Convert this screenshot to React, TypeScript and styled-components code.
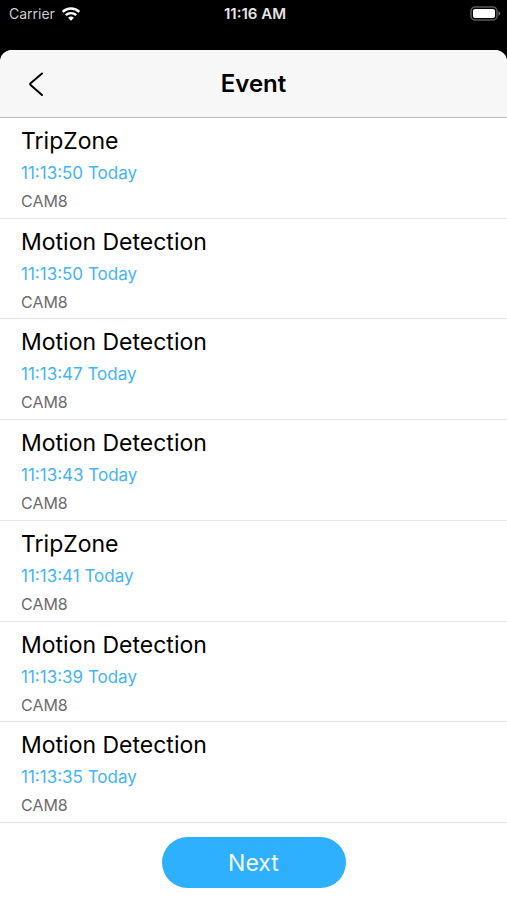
import React from "react";
import styled, { createGlobalStyle } from "styled-components";

const GlobalStyle = createGlobalStyle`
  *, *::before, *::after { box-sizing: border-box; }
  html, body { margin: 0; background: #000; }
  body { font-family: Inter, "Liberation Sans", sans-serif; color: #000; }
`;

const Screen = styled.div`
  min-height: 100vh;
  display: flex;
  flex-direction: column;
`;

const StatusBar = styled.div`
  height: 50px;
  padding: 3px 6px 0 9px;
  display: grid;
  grid-template-columns: 1fr auto 1fr;
  align-items: start;
  color: #e6e6e6;
  font-size: 15px;
  line-height: 22px;
`;

const Carrier = styled.div`
  display: flex;
  align-items: center;
  gap: 6px;
  color: #ccc;
  font-size: 14px;
`;

const Clock = styled.time`
  font-weight: 600;
`;

const Battery = styled.div`
  height: 22px;
  display: flex;
  align-items: center;
  justify-content: flex-end;
`;

const Sheet = styled.main`
  flex: 1;
  display: flex;
  flex-direction: column;
  background: #fff;
  border-radius: 12px 12px 0 0;
  overflow: hidden;
`;

const Header = styled.header`
  height: 68px;
  padding: 0 20px;
  display: grid;
  grid-template-columns: 32px 1fr 32px;
  align-items: center;
  background: #f7f7f7;
  border-bottom: 1px solid #bcbcbc;
`;

const BackButton = styled.button`
  height: 40px;
  padding: 0;
  display: flex;
  align-items: center;
  justify-content: center;
  border: 0;
  background: none;
  color: #000;
`;

const Title = styled.h1`
  margin: 0;
  padding-top: 1px;
  text-align: center;
  font-size: 24px;
  font-weight: 600;
  line-height: 32px;
`;

const EventList = styled.ul`
  flex: 1;
  margin: 0;
  padding: 0;
  display: grid;
  grid-auto-rows: 1fr;
  list-style: none;
`;

const EventRow = styled.li`
  padding: 7px 21px 4px;
  border-bottom: 1px solid #e6e6e6;
`;

const EventName = styled.h2`
  margin: 0;
  font-size: 23px;
  font-weight: 400;
  line-height: 32px;
`;

const EventTime = styled.time`
  display: block;
  color: #45b3f8;
  font-size: 17px;
  line-height: 32px;
`;

const Camera = styled.p`
  margin: 0;
  color: #6c6c6c;
  font-size: 16px;
  line-height: 24px;
`;

const Footer = styled.footer`
  padding: 14px 20px 12px;
  display: flex;
  justify-content: center;
`;

const NextButton = styled.button`
  width: 184px;
  height: 51px;
  border: 0;
  border-radius: 26px;
  background: #2eb0ff;
  color: #f2faff;
  font: inherit;
  font-size: 23px;
  line-height: 32px;
`;

const events = [
  { name: "TripZone", time: "11:13:50" },
  { name: "Motion Detection", time: "11:13:50" },
  { name: "Motion Detection", time: "11:13:47" },
  { name: "Motion Detection", time: "11:13:43" },
  { name: "TripZone", time: "11:13:41" },
  { name: "Motion Detection", time: "11:13:39" },
  { name: "Motion Detection", time: "11:13:35" },
];

export default function App() {
  return (
    <Screen>
      <GlobalStyle />
      <StatusBar>
        <Carrier>
          Carrier
          <svg width="20" height="16" viewBox="0 0 20 16" fill="none" aria-hidden="true">
            <path d="M1.700 5.900a12 12 0 0 1 16.600 0M4.800 9.200a7.500 7.500 0 0 1 10.400 0" stroke="#fff" strokeWidth="2.400" />
            <path d="M10 14.700 7.100 11.800a4.200 4.200 0 0 1 5.800 0Z" fill="#fff" />
          </svg>
        </Carrier>
        <Clock>11:16 AM</Clock>
        <Battery>
          <svg width="31" height="16" viewBox="0 0 31 16" role="img" aria-label="Battery full">
            <rect x="1" y="1" width="26" height="13" rx="4" fill="none" stroke="#5a5a5a" strokeWidth="1.500" />
            <rect x="3" y="3" width="22" height="9" rx="2" fill="#fff" />
            <path d="M28.500 5.300c2.300.800 2.300 3.600 0 4.400Z" fill="#777" />
          </svg>
        </Battery>
      </StatusBar>
      <Sheet>
        <Header>
          <BackButton type="button" aria-label="Back">
            <svg width="18" height="26" viewBox="0 0 18 26" fill="none" aria-hidden="true">
              <path
                d="M15 2.500 3.600 12.200q-1 .9 0 1.800L15 24"
                stroke="currentColor"
                strokeWidth="2"
                strokeLinecap="round"
                strokeLinejoin="round"
              />
            </svg>
          </BackButton>
          <Title>Event</Title>
        </Header>
        <EventList>
          {events.map((event, index) => (
            <EventRow key={index}>
              <EventName>{event.name}</EventName>
              <EventTime>{event.time} Today</EventTime>
              <Camera>CAM8</Camera>
            </EventRow>
          ))}
        </EventList>
        <Footer>
          <NextButton type="button">Next</NextButton>
        </Footer>
      </Sheet>
    </Screen>
  );
}
